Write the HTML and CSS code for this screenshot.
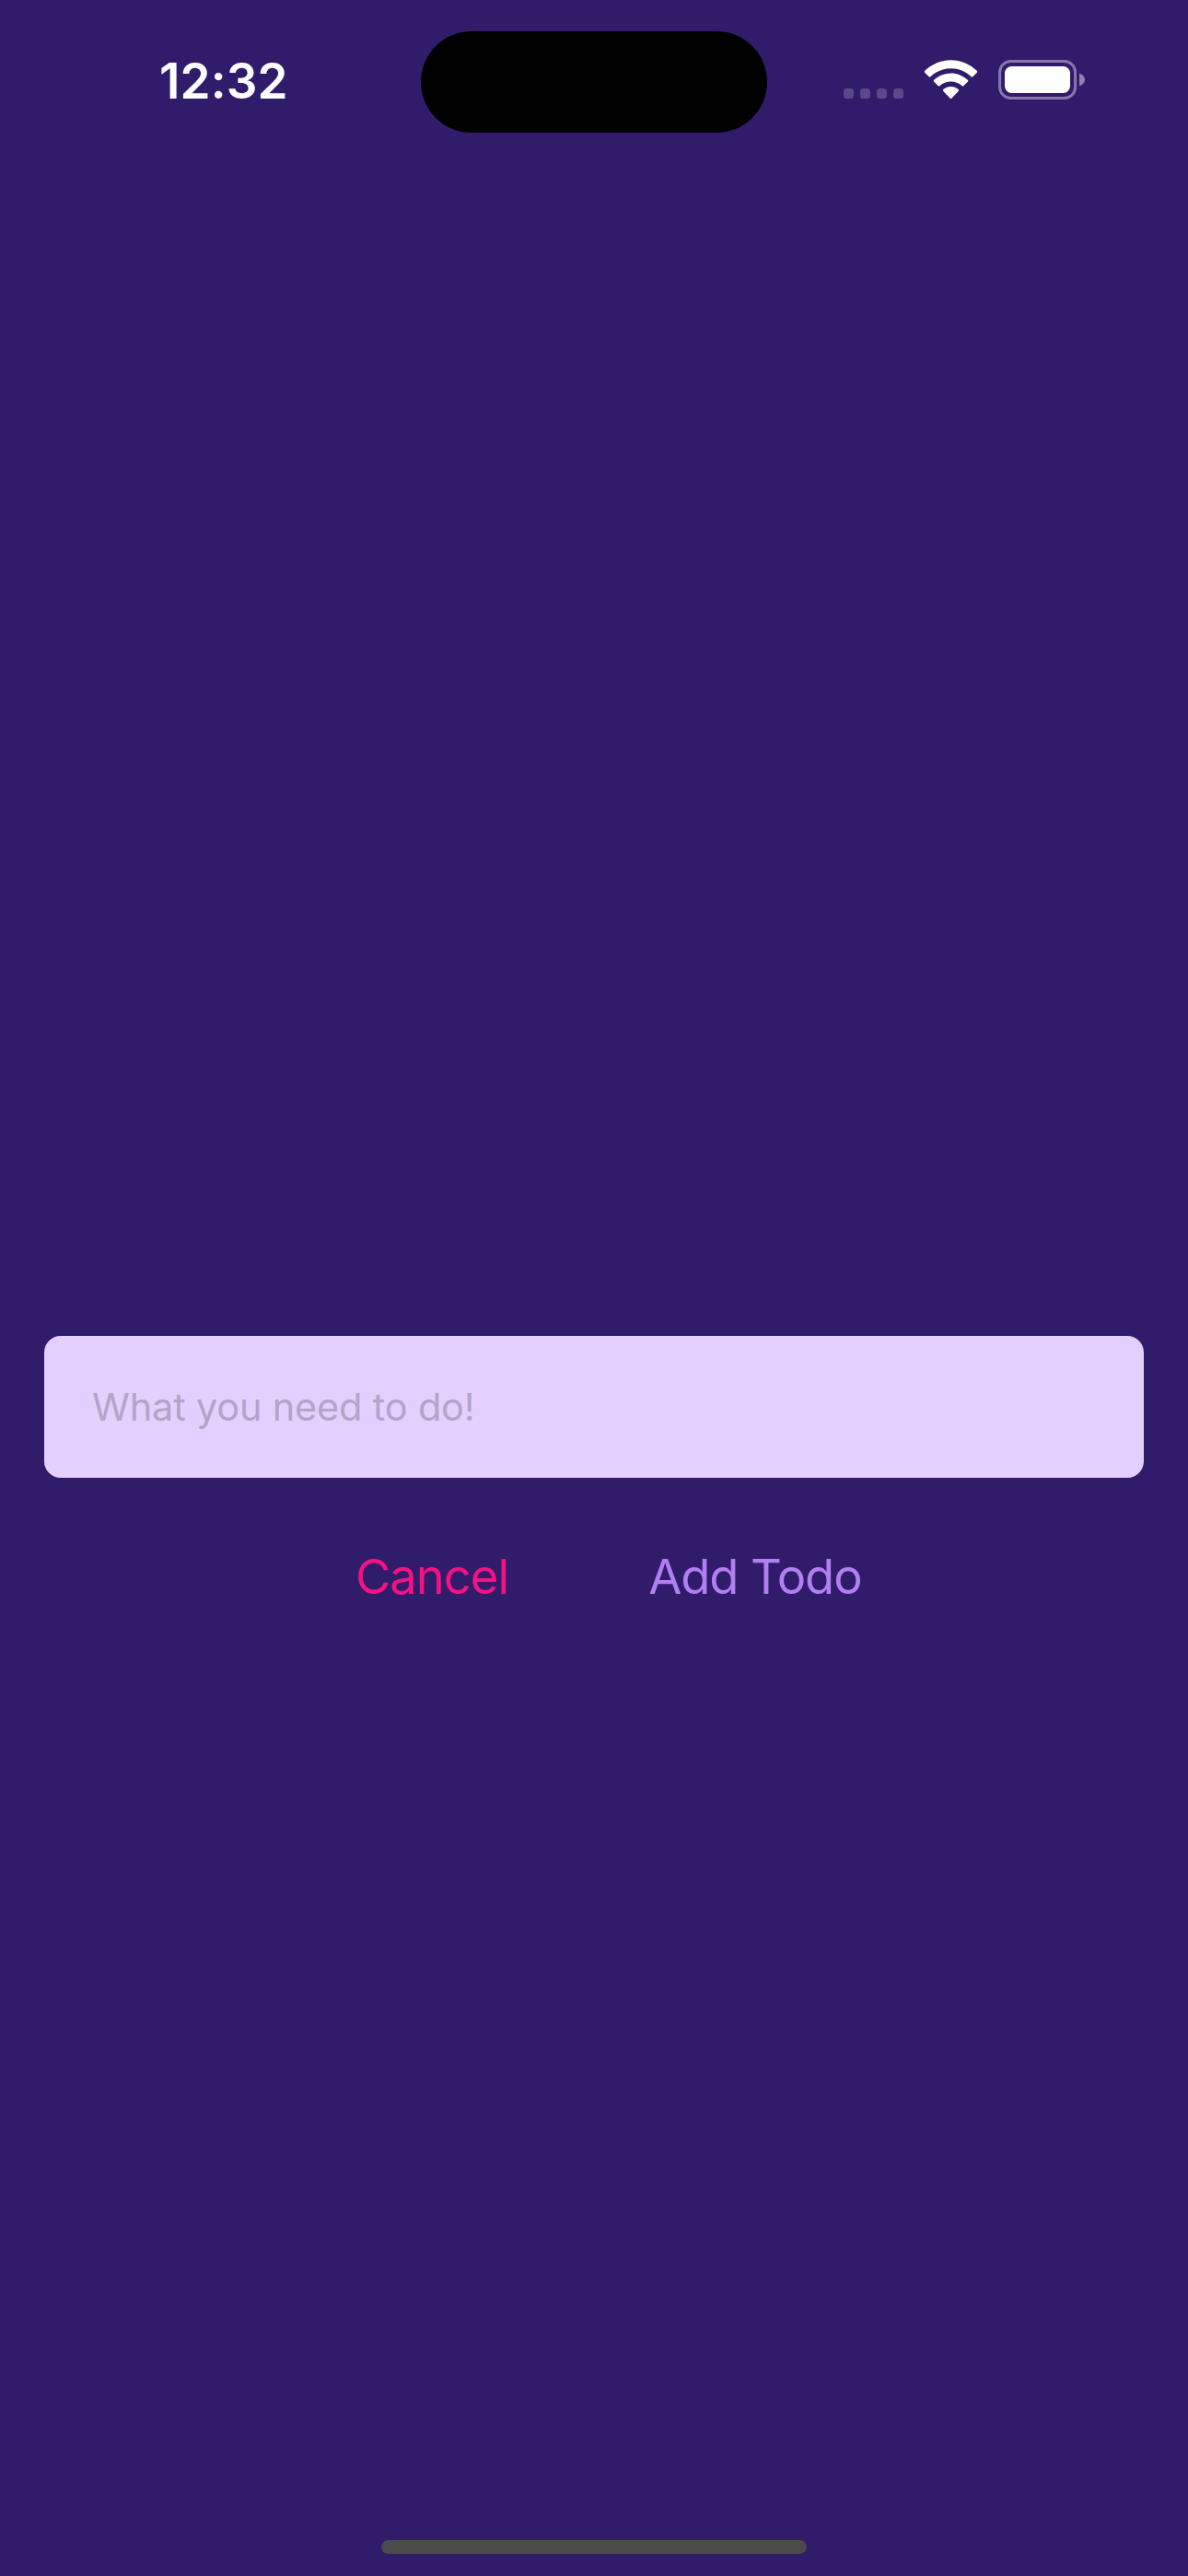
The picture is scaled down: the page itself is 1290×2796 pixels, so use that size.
FILE: index.html
```html
<!DOCTYPE html>
<html lang="en">
<head>
<meta charset="utf-8">
<title>Add Todo</title>
<link rel="stylesheet" href="styles.css">
</head>
<body>
<div class="screen">
  <header class="status-bar">
    <div class="clock">12:32</div>
    <div class="island"></div>
    <svg class="status-icons" width="262" height="43" viewBox="916 65 262 43" aria-hidden="true">
      <g fill="#5a4989">
        <rect x="916" y="96" width="11" height="11" rx="3.6"/>
        <rect x="934" y="96" width="11" height="11" rx="3.6"/>
        <rect x="952" y="96" width="11" height="11" rx="3.6"/>
        <rect x="970" y="96" width="11" height="11" rx="3.6"/>
      </g>
      <g fill="#fff">
        <path d="M1032.500 65.200 C1043 65.200 1053 69.300 1060.700 76.800 Q1061.700 77.800 1060.700 78.900 L1056.500 83 Q1055.500 84 1054.400 83 C1048.500 77.400 1040.800 74.200 1032.500 74.200 C1024.200 74.200 1016.500 77.400 1010.600 83 Q1009.500 84 1008.500 83 L1004.300 78.900 Q1003.300 77.800 1004.300 76.800 C1012 69.300 1022 65.200 1032.500 65.200 Z"/>
        <path d="M1032.500 79.400 C1039.300 79.400 1045.800 82 1050.800 86.700 Q1051.800 87.700 1050.800 88.700 L1046.500 93 Q1045.500 94 1044.400 93 C1041.200 90 1037 88.400 1032.500 88.400 C1028 88.400 1023.800 90 1020.600 93 Q1019.500 94 1018.500 93 L1014.200 88.700 Q1013.200 87.700 1014.200 86.700 C1019.200 82 1025.700 79.400 1032.500 79.400 Z"/>
        <path d="M1032.500 94 C1035.500 94 1038.400 95 1040.700 97 Q1041.700 98 1040.700 99 L1033.500 106.500 Q1032.500 107.500 1031.500 106.500 L1024.300 99 Q1023.300 98 1024.300 97 C1026.600 95 1029.500 94 1032.500 94 Z"/>
      </g>
      <rect x="1085.600" y="66.500" width="82" height="40" rx="12" fill="none" stroke="#8678ab" stroke-width="3"/>
      <path d="M1172 79.700 C1175.500 80.800 1178 83.500 1178 86.500 C1178 89.500 1175.500 92.200 1172 93.300 Z" fill="#9083b2"/>
      <rect x="1091" y="72" width="71" height="29" rx="7.500" fill="#fff"/>
    </svg>
  </header>
  <main class="form">
    <input class="todo-input" type="text" placeholder="What you need to do!">
    <div class="actions">
      <button class="action cancel" type="button">Cancel</button>
      <button class="action add" type="button">Add Todo</button>
    </div>
  </main>
  <footer class="home-area"><div class="home-indicator"></div></footer>
</div>
</body>
</html>
```
FILE: styles.css
```css
* {
  box-sizing: border-box;
}

body {
  margin: 0;
  background: #311b6b;
  font-family: Inter, "Liberation Sans", sans-serif;
}

.screen {
  display: flex;
  flex-direction: column;
  width: 1290px;
  height: 2796px;
  overflow: hidden;
  background: #311b6b;
}

.status-bar {
  display: grid;
  grid-template-columns: 457px 376px 457px;
  align-items: start;
  height: 177px;
  padding-top: 34px;
}

.clock {
  margin: 22px 0 0 173px;
  color: #fff;
  font-size: 53px;
  font-weight: 600;
  line-height: 64px;
  letter-spacing: 0.1px;
  white-space: nowrap;
}

.island {
  height: 110px;
  border-radius: 55px;
  background: #000;
}

.status-icons {
  display: block;
  margin: 31px 0 0 83px;
}

.form {
  flex: 1;
  padding: 1273px 48px 0;
}

.todo-input {
  display: block;
  width: 100%;
  height: 154px;
  padding: 0 52px;
  border: 0;
  border-radius: 18px;
  outline: 0;
  background: #e4d0ff;
  color: #120438;
  font-family: inherit;
  font-size: 41.5px;
  letter-spacing: -0.2px;
}

.todo-input::placeholder {
  color: #b4a4c9;
  opacity: 1;
}

.actions {
  display: flex;
  gap: 152px;
  margin-top: 72px;
  padding-left: 338px;
}

.action {
  padding: 0;
  border: 0;
  background: none;
  font-family: inherit;
  font-size: 52.5px;
  line-height: 70px;
  letter-spacing: -1px;
  white-space: nowrap;
}

.cancel {
  color: #f31282;
}

.add {
  color: #b180f0;
  letter-spacing: -1.1px;
}

.home-area {
  display: flex;
  justify-content: center;
  padding-bottom: 24px;
}

.home-indicator {
  width: 462px;
  height: 15px;
  border-radius: 7.5px;
  background: #4b4b4b;
}
```
